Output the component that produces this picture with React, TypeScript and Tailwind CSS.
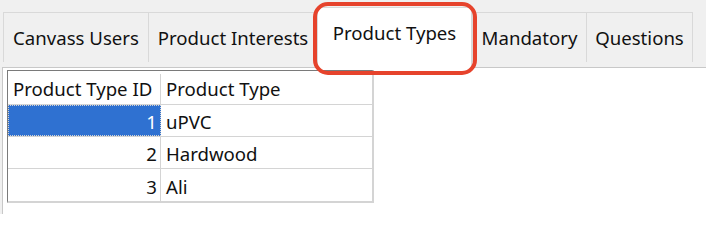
const tabs = [
  { label: "Canvass Users", w: "w-[145px]" },
  { label: "Product Interests", w: "w-[169px]" },
  { label: "Product Types", w: "w-[155px]", active: true },
  { label: "Mandatory", w: "w-[114px]" },
  { label: "Questions", w: "w-[107px]" },
];

const rows = [
  { id: 1, name: "uPVC" },
  { id: 2, name: "Hardwood" },
  { id: 3, name: "Ali" },
];

export default function App() {
  return (
    <div
      className="relative h-[214px] w-[706px] overflow-hidden bg-[#f0f0f0] text-[18.6px] text-[#111]"
      style={{ fontFamily: '"Noto Sans", "Open Sans", sans-serif' }}
    >
      {/* tab strip */}
      <div className="flex h-[67px] items-end pl-[3px]">
        {tabs.map((t) =>
          t.active ? (
            <div
              key={t.label}
              className={`${t.w} z-10 -mb-[2px] flex h-[62px] items-start justify-center border-x border-t border-[#d9d9d9] bg-white pt-[16px] leading-none`}
            >
              {t.label}
            </div>
          ) : (
            <div
              key={t.label}
              className={`${t.w} mb-[5px] flex h-[50px] items-center justify-center border-l border-t border-[#d9d9d9] bg-[#f0f0f0] pt-[2px] leading-none last:border-r`}
            >
              {t.label}
            </div>
          ),
        )}
      </div>

      {/* panel */}
      <div className="ml-[2px] h-[160px] border-l border-t border-[#c8c8c8] bg-white pl-[4px] pt-[2px]">
        <div className="w-[367px] border-l border-t border-[#7a7a7a] border-r-2 border-b-2 border-r-[#d4d4d4] border-b-[#d4d4d4]">
          <div className="flex h-[34px] border-b border-[#d4d4d4] pt-[3px]">
            <div className="flex w-[153px] items-center border-r border-[#d4d4d4] pl-[5px]">
              Product Type ID
            </div>
            <div className="flex flex-1 items-center pl-[5px]">Product Type</div>
          </div>
          {rows.map((r, i) => (
            <div
              key={r.id}
              className={`flex h-[32px] ${i < rows.length - 1 ? "border-b border-[#d4d4d4]" : ""}`}
            >
              <div
                className={`flex w-[153px] items-center justify-end border-r border-[#d4d4d4] pr-[3px] pt-[3px] ${
                  i === 0
                    ? "border border-dotted border-[#2a2a2a] bg-[#2f71d1] text-white"
                    : ""
                }`}
              >
                {r.id}
              </div>
              <div className="flex flex-1 items-center pl-[5px] pt-[3px]">{r.name}</div>
            </div>
          ))}
        </div>
      </div>

      {/* annotation highlight */}
      <div className="pointer-events-none absolute left-[313px] top-[2px] z-20 h-[73px] w-[164px] rounded-[15px] border-[4px] border-[#e6432c]" />
    </div>
  );
}
